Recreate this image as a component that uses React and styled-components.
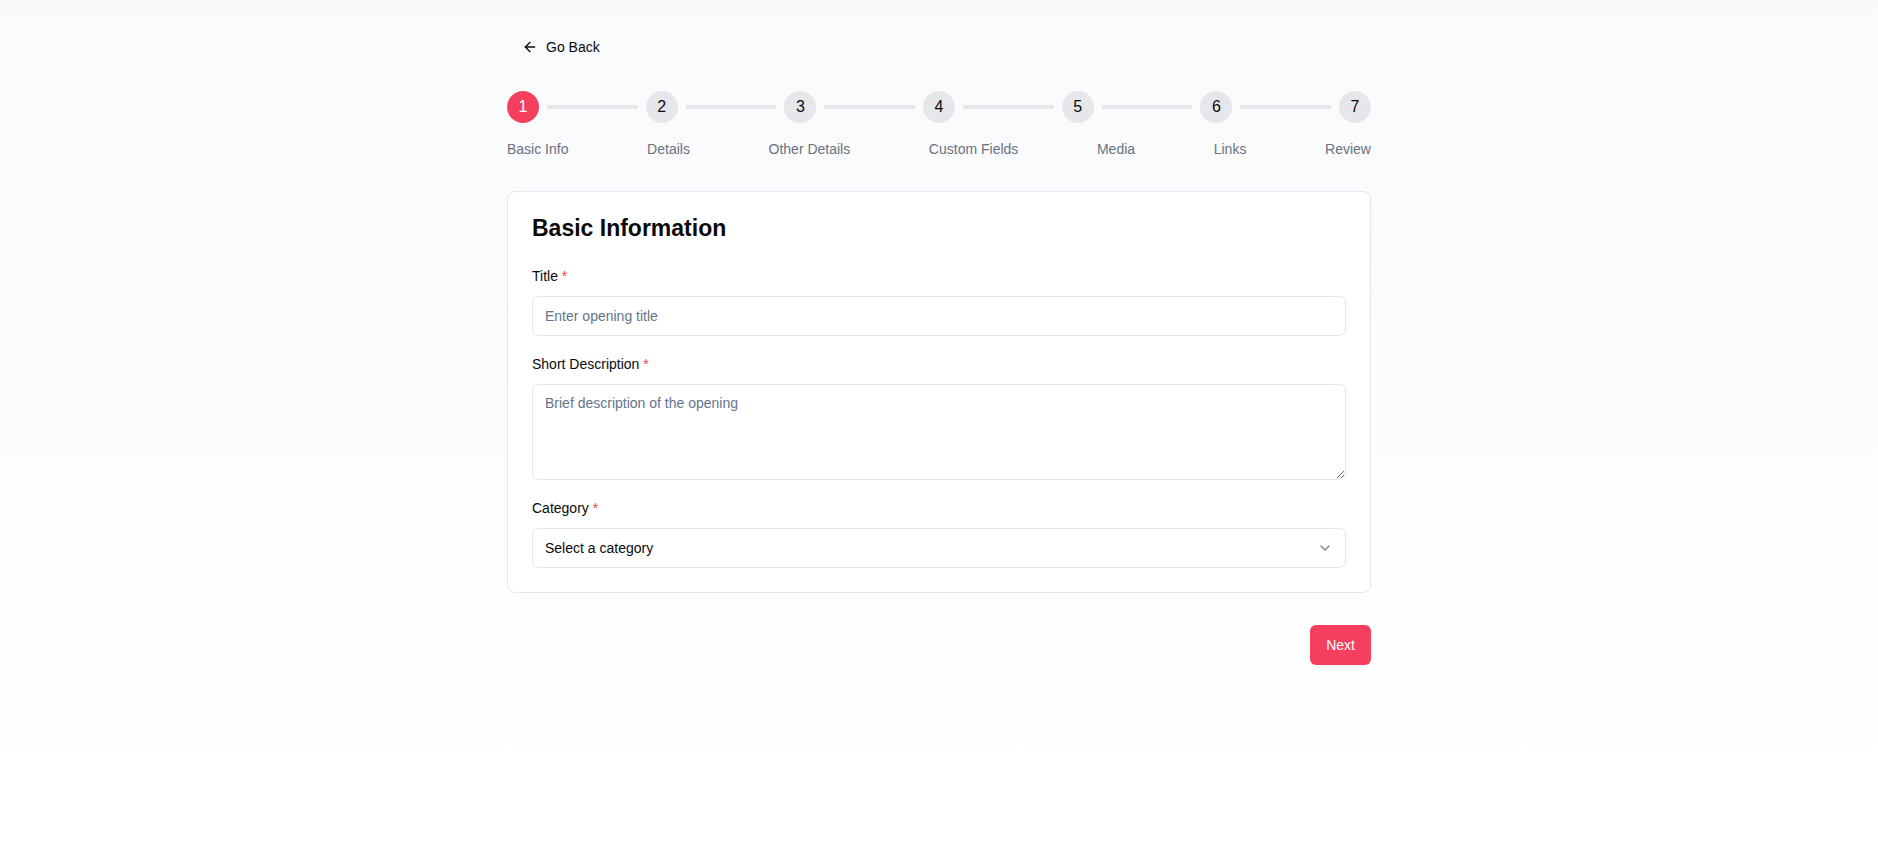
import React, { useState } from 'react';
import styled, { createGlobalStyle } from 'styled-components';
import { ArrowLeft, ChevronDown } from 'lucide-react';

const GlobalStyle = createGlobalStyle`
  html, body {
    margin: 0;
    padding: 0;
  }
  body {
    font-family: "Liberation Sans", Arial, sans-serif;
    color: #0a0a0a;
  }
  * {
    box-sizing: border-box;
  }
`;

const Page = styled.div`
  min-height: 846px;
  background: linear-gradient(to bottom, #f8fafc, #ffffff);
  padding: 32px 16px;
`;

const Container = styled.div`
  max-width: 864px;
  margin: 0 auto;
`;

const BackButton = styled.button`
  display: inline-flex;
  align-items: center;
  gap: 8px;
  height: 30px;
  padding: 0 15px;
  border: none;
  background: transparent;
  font-family: inherit;
  font-size: 14px;
  color: #0a0a0a;
  cursor: pointer;
  border-radius: 6px;
  margin-bottom: 29px;
`;

const StepTrack = styled.div`
  display: flex;
  align-items: center;
`;

const StepCircle = styled.div`
  width: 32px;
  height: 32px;
  border-radius: 50%;
  flex-shrink: 0;
  display: flex;
  align-items: center;
  justify-content: center;
  font-size: 16px;
  background: ${(p) => (p.$active ? '#f43f5e' : '#e5e7eb')};
  color: ${(p) => (p.$active ? '#ffffff' : '#0a0a0a')};
`;

const StepLine = styled.div`
  flex: 1;
  height: 4px;
  margin: 0 8px;
  background: #e5e7eb;
`;

const StepLabels = styled.div`
  display: flex;
  justify-content: space-between;
  margin-top: 16px;
  font-size: 14px;
  line-height: 20px;
  color: #6b7280;
`;

const Card = styled.div`
  margin-top: 32px;
  background: #ffffff;
  border: 1px solid #e2e8f0;
  border-radius: 8px;
  padding: 24px;
`;

const Heading = styled.h2`
  margin: 0 0 24px;
  font-size: 23px;
  line-height: 24px;
  font-weight: 700;
  color: #0a0a0a;
`;

const Fields = styled.div`
  display: flex;
  flex-direction: column;
  gap: 16px;
`;

const Field = styled.div`
  display: flex;
  flex-direction: column;
`;

const Label = styled.label`
  font-size: 14px;
  line-height: 24px;
  margin-bottom: 8px;
  color: #0a0a0a;
`;

const Required = styled.span`
  color: #ef4444;
`;

const Input = styled.input`
  height: 40px;
  width: 100%;
  padding: 0 12px;
  border: 1px solid #e2e8f0;
  border-radius: 6px;
  font-family: inherit;
  font-size: 14px;
  background: #ffffff;
  &::placeholder {
    color: #64748b;
  }
  &:focus {
    outline: none;
  }
`;

const TextArea = styled.textarea`
  height: 96px;
  width: 100%;
  padding: 8px 12px;
  border: 1px solid #e2e8f0;
  border-radius: 6px;
  font-family: inherit;
  font-size: 14px;
  line-height: 20px;
  background: #ffffff;
  &::placeholder {
    color: #64748b;
  }
  &:focus {
    outline: none;
  }
`;

const SelectBox = styled.button`
  height: 40px;
  width: 100%;
  padding: 0 12px;
  display: flex;
  align-items: center;
  justify-content: space-between;
  border: 1px solid #e2e8f0;
  border-radius: 6px;
  background: #ffffff;
  font-family: inherit;
  font-size: 14px;
  color: #0a0a0a;
  cursor: pointer;
  svg {
    opacity: 0.5;
  }
`;

const Actions = styled.div`
  display: flex;
  justify-content: flex-end;
  margin-top: 32px;
`;

const NextButton = styled.button`
  height: 40px;
  padding: 0 16px;
  border: none;
  border-radius: 6px;
  background: #f43f5e;
  color: #ffffff;
  font-family: inherit;
  font-size: 14px;
  cursor: pointer;
`;

const steps = ['Basic Info', 'Details', 'Other Details', 'Custom Fields', 'Media', 'Links', 'Review'];

const App = () => {
  const [current] = useState(0);
  const [title, setTitle] = useState('');
  const [desc, setDesc] = useState('');

  return (
    <Page>
      <GlobalStyle />
      <Container>
        <BackButton>
          <ArrowLeft size={16} />
          Go Back
        </BackButton>

        <StepTrack>
          {steps.map((s, i) => (
            <React.Fragment key={s}>
              <StepCircle $active={i === current}>{i + 1}</StepCircle>
              {i < steps.length - 1 && <StepLine />}
            </React.Fragment>
          ))}
        </StepTrack>
        <StepLabels>
          {steps.map((s) => (
            <span key={s}>{s}</span>
          ))}
        </StepLabels>

        <Card>
          <Heading>Basic Information</Heading>
          <Fields>
            <Field>
              <Label>Title <Required>*</Required></Label>
              <Input
                placeholder="Enter opening title"
                value={title}
                onChange={(e) => setTitle(e.target.value)}
              />
            </Field>
            <Field>
              <Label>Short Description <Required>*</Required></Label>
              <TextArea
                placeholder="Brief description of the opening"
                value={desc}
                onChange={(e) => setDesc(e.target.value)}
              />
            </Field>
            <Field>
              <Label>Category <Required>*</Required></Label>
              <SelectBox type="button">
                <span>Select a category</span>
                <ChevronDown size={16} />
              </SelectBox>
            </Field>
          </Fields>
        </Card>

        <Actions>
          <NextButton>Next</NextButton>
        </Actions>
      </Container>
    </Page>
  );
};

export default App;
